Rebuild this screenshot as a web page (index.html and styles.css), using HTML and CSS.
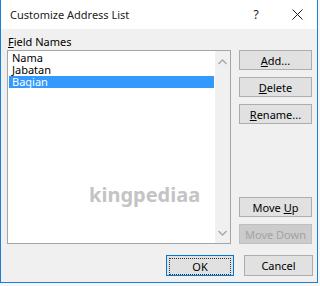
FILE: index.html
```html
<!DOCTYPE html>
<html lang="en">
<head>
  <meta charset="UTF-8">
  <title>Customize Address List</title>
  <link rel="stylesheet" href="styles.css">
</head>
<body>
  <div class="dialog">
    <div class="titlebar">
      <span class="title">Customize Address List</span>
      <span class="help">?</span>
      <span class="close">
        <svg width="11" height="11" viewBox="0 0 11 11"><path d="M0.5 0.5 L10.5 10.5 M10.5 0.5 L0.5 10.5" stroke="#222" stroke-width="1" fill="none"/></svg>
      </span>
    </div>

    <div class="content">
      <div class="label"><u>F</u>ield Names</div>
      <div class="main">
        <div class="listbox">
          <ul class="items">
            <li>Nama</li>
            <li>Jabatan</li>
            <li class="selected">Bagian</li>
          </ul>
          <div class="scrollbar">
            <svg width="9" height="6" viewBox="0 0 9 6"><path d="M0.5 5 L4.5 1 L8.5 5" stroke="#a6a6a6" stroke-width="1.3" fill="none"/></svg>
            <svg width="9" height="6" viewBox="0 0 9 6"><path d="M0.5 1 L4.5 5 L8.5 1" stroke="#a6a6a6" stroke-width="1.3" fill="none"/></svg>
          </div>
          <div class="watermark">kingpediaa</div>
        </div>
        <div class="buttons">
          <button class="btn"><u>A</u>dd...</button>
          <button class="btn"><u>D</u>elete</button>
          <button class="btn"><u>R</u>ename...</button>
          <div class="spacer"></div>
          <button class="btn">Move <u>U</u>p</button>
          <button class="btn disabled">Move Down</button>
        </div>
      </div>
      <div class="footer">
        <button class="btn ok"><span class="focus">OK</span></button>
        <button class="btn cancel">Cancel</button>
      </div>
    </div>
  </div>
</body>
</html>
```

FILE: styles.css
```css
body {
  margin: 0;
  background-color: #f4f6f8;
  font-family: "Noto Sans", "Open Sans", sans-serif;
  font-size: 11px;
  color: #000;
}

.dialog {
  width: 316px;
  height: 282px;
  border: 1px solid #1c7fd6;
  border-top: none;
  background-color: #f0f0f0;
  display: flex;
  flex-direction: column;
}

.titlebar {
  height: 30px;
  background-color: #fff;
  display: flex;
  align-items: center;
  padding-left: 9px;
}

.title {
  flex: 1;
  font-size: 11px;
  color: #222;
}

.help {
  width: 12px;
  text-align: center;
  font-size: 12px;
  color: #222;
  margin-right: 30px;
}

.close {
  display: flex;
  margin-right: 14px;
}

.content {
  flex: 1;
  display: flex;
  flex-direction: column;
  padding: 5px 4px 6px 6px;
}

.label {
  height: 16px;
  line-height: 16px;
  padding-left: 1px;
}

.main {
  display: flex;
  gap: 8px;
  height: 194px;
}

.listbox {
  position: relative;
  width: 222px;
  border: 1px solid #a5a5a5;
  background-color: #fff;
  display: flex;
}

.items {
  list-style: none;
  margin: 0;
  padding: 1px 1px 0 1px;
  flex: 1;
}

.items li {
  height: 12px;
  line-height: 12px;
  padding-left: 3px;
  font-size: 11px;
}

.items li.selected {
  background-color: #3399ff;
  color: #fff;
}

.scrollbar {
  width: 15px;
  background-color: #f0f0f0;
  display: flex;
  flex-direction: column;
  justify-content: space-between;
  align-items: center;
  padding: 8px 0 7px;
}

.watermark {
  position: absolute;
  left: 81px;
  top: 130px;
  font-size: 20px;
  font-weight: bold;
  color: #c4c4c4;
}

.buttons {
  width: 73px;
  display: flex;
  flex-direction: column;
  gap: 7px;
}

.spacer {
  flex: 1;
}

.btn {
  height: 20px;
  padding: 0;
  background-color: #e1e1e1;
  border: 1px solid #adadad;
  font-family: inherit;
  font-size: 11px;
  color: #000;
}

.btn.disabled {
  background-color: #cccccc;
  border-color: #bfbfbf;
  color: #a3a3a3;
}

.footer {
  display: flex;
  justify-content: flex-end;
  gap: 10px;
  margin-top: 11px;
}

.footer .btn {
  height: 21px;
}

.ok {
  width: 68px;
  border-color: #0078d7;
  padding: 2px;
}

.focus {
  display: block;
  height: 15px;
  line-height: 15px;
  border: 1px dotted #333;
}

.cancel {
  width: 69px;
}
```
